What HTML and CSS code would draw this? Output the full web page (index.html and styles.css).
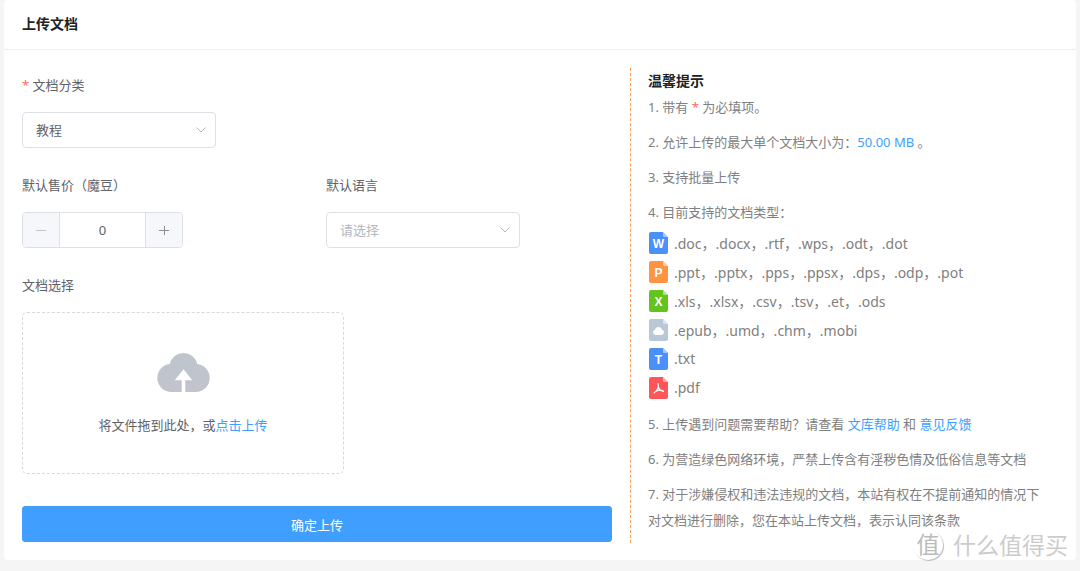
FILE: index.html
```html
<!DOCTYPE html>
<html lang="zh-CN">
<head>
<meta charset="utf-8">
<meta name="viewport" content="width=device-width, initial-scale=1">
<title>上传文档</title>
<link rel="stylesheet" href="styles.css">
</head>
<body>
<main class="card">
  <header class="card-header"><h1 class="title">上传文档</h1></header>
  <div class="card-body">
    <form class="form">
      <div class="form-item">
        <label class="label" for="category"><span class="required">*</span> 文档分类</label>
        <div class="select-wrap">
          <select class="select" id="category"><option>教程</option></select>
          <svg class="chevron" viewBox="0 0 10 6" aria-hidden="true"><path d="M.5.5 5 5 9.500.5"/></svg>
        </div>
      </div>
      <div class="form-row">
        <div class="form-item">
          <label class="label" for="price">默认售价（魔豆）</label>
          <div class="stepper">
            <button class="step" type="button" aria-label="减少" disabled><svg viewBox="0 0 10 10"><path d="M0 5.500H10"/></svg></button>
            <input class="step-value" id="price" type="text" inputmode="numeric" value="0">
            <button class="step" type="button" aria-label="增加"><svg viewBox="0 0 10 10"><path d="M0 5.500H10M5.500 1V10"/></svg></button>
          </div>
        </div>
        <div class="form-item">
          <label class="label" for="language">默认语言</label>
          <div class="select-wrap">
            <select class="select placeholder" id="language"><option>请选择</option></select>
            <svg class="chevron" viewBox="0 0 10 6" aria-hidden="true"><path d="M.5.5 5 5 9.500.5"/></svg>
          </div>
        </div>
      </div>
      <div class="form-item">
        <label class="label" for="files">文档选择</label>
        <label class="dropzone">
          <input class="file-input" id="files" type="file" multiple>
          <svg class="cloud" viewBox="0 0 53 40" aria-hidden="true">
            <path d="M13.500 40A14 14 0 0 1 12.800 12.100 14 14 0 0 1 40.200 12.100 14 14 0 0 1 39.500 40H28.300V28.300H35.300L26.500 17.300 17.700 28.300H24.700V40Z"/>
          </svg>
          <span class="drop-text">将文件拖到此处，或<span class="link">点击上传</span></span>
        </label>
      </div>
      <button class="submit" type="submit">确定上传</button>
    </form>
    <aside class="tips">
      <h2 class="title">温馨提示</h2>
      <p class="tip">1. 带有 <span class="required">*</span> 为必填项。</p>
      <p class="tip">2. 允许上传的最大单个文档大小为：<span class="link">50.00 MB</span> 。</p>
      <p class="tip">3. 支持批量上传</p>
      <p class="tip">4. 目前支持的文档类型：</p>
      <ul class="types">
        <li class="type"><svg class="file-icon word" viewBox="0 0 19 22" aria-hidden="true"><path class="sheet" d="M2 0H14L19 5V20A2 2 0 0 1 17 22H2A2 2 0 0 1 0 20V2A2 2 0 0 1 2 0Z"/><path class="fold" d="M14 0 19 5H15A1 1 0 0 1 14 4Z"/><text x="9.500" y="16">W</text></svg>.doc，.docx，.rtf，.wps，.odt，.dot</li>
        <li class="type"><svg class="file-icon slides" viewBox="0 0 19 22" aria-hidden="true"><path class="sheet" d="M2 0H14L19 5V20A2 2 0 0 1 17 22H2A2 2 0 0 1 0 20V2A2 2 0 0 1 2 0Z"/><path class="fold" d="M14 0 19 5H15A1 1 0 0 1 14 4Z"/><text x="9.500" y="16">P</text></svg>.ppt，.pptx，.pps，.ppsx，.dps，.odp，.pot</li>
        <li class="type"><svg class="file-icon sheetfile" viewBox="0 0 19 22" aria-hidden="true"><path class="sheet" d="M2 0H14L19 5V20A2 2 0 0 1 17 22H2A2 2 0 0 1 0 20V2A2 2 0 0 1 2 0Z"/><path class="fold" d="M14 0 19 5H15A1 1 0 0 1 14 4Z"/><text x="9.500" y="16">X</text></svg>.xls，.xlsx，.csv，.tsv，.et，.ods</li>
        <li class="type"><svg class="file-icon book" viewBox="0 0 19 22" aria-hidden="true"><path class="sheet" d="M2 0H14L19 5V20A2 2 0 0 1 17 22H2A2 2 0 0 1 0 20V2A2 2 0 0 1 2 0Z"/><path class="fold" d="M14 0 19 5H15A1 1 0 0 1 14 4Z"/><path class="mark" d="M6.500 16A2.700 2.700 0 0 1 6 10.700 3.600 3.600 0 0 1 13 10.700 2.700 2.700 0 0 1 12.500 16Z"/></svg>.epub，.umd，.chm，.mobi</li>
        <li class="type"><svg class="file-icon word" viewBox="0 0 19 22" aria-hidden="true"><path class="sheet" d="M2 0H14L19 5V20A2 2 0 0 1 17 22H2A2 2 0 0 1 0 20V2A2 2 0 0 1 2 0Z"/><path class="fold" d="M14 0 19 5H15A1 1 0 0 1 14 4Z"/><text x="9.500" y="16">T</text></svg>.txt</li>
        <li class="type"><svg class="file-icon pdf" viewBox="0 0 19 22" aria-hidden="true"><path class="sheet" d="M2 0H14L19 5V20A2 2 0 0 1 17 22H2A2 2 0 0 1 0 20V2A2 2 0 0 1 2 0Z"/><path class="fold" d="M14 0 19 5H15A1 1 0 0 1 14 4Z"/><path class="line" d="M9 6.500C10 9.500 9 13 5 16M9.300 10C10.200 12.500 12 14 14.500 14.500M6.500 14.500C9 13.200 11.500 12.800 14 13.500"/></svg>.pdf</li>
      </ul>
      <p class="tip">5. 上传遇到问题需要帮助？请查看 <a class="link" href="#help">文库帮助</a> 和 <a class="link" href="#feedback">意见反馈</a></p>
      <p class="tip">6. 为营造绿色网络环境，严禁上传含有淫秽色情及低俗信息等文档</p>
      <p class="tip">7. 对于涉嫌侵权和违法违规的文档，本站有权在不提前通知的情况下对文档进行删除，您在本站上传文档，表示认同该条款</p>
    </aside>
  </div>
  <div class="watermark"><span class="seal">值</span><span>什么值得买</span></div>
</main>
</body>
</html>
```
FILE: styles.css
```css
* { box-sizing: border-box; }
body {
  margin: 0;
  padding: 0 4px 11px;
  background: #f5f5f5;
  color: #606266;
  font-family: "Noto Sans", "Noto Sans CJK SC", sans-serif;
  font-size: 13px;
}
input, select, button { font: inherit; color: inherit; }
h1, h2, p, ul { margin: 0; padding: 0; }
.card { position: relative; background: #fff; border-radius: 4px; }
.card-header { padding: 11px 18px 12px; border-bottom: 1px solid #ebeef5; }
.title { font-size: 14px; line-height: 26px; font-weight: 700; color: #222; }
.card-body {
  display: grid;
  grid-template-columns: minmax(0, 590fr) minmax(0, 428fr);
  gap: 18px;
  padding: 18px 18px 17px;
}
.form { display: flex; flex-direction: column; gap: 20px; }
.form-row { display: grid; grid-template-columns: 1fr 1fr; gap: 18px; }
.label { display: block; line-height: 34px; margin-bottom: 10px; }
.required { color: #f56c6c; }
.link { color: #409eff; text-decoration: none; }
.select-wrap { position: relative; width: 194px; }
.select {
  display: block;
  width: 100%;
  height: 36px;
  padding: 0 32px 0 13px;
  appearance: none;
  background: #fff;
  border: 1px solid #dcdfe6;
  border-radius: 4px;
}
.placeholder { color: #b4b8c0; }
.chevron {
  position: absolute;
  right: 10px;
  top: 15px;
  width: 10px;
  height: 6px;
  fill: none;
  stroke: #b4b8c0;
  pointer-events: none;
}
.stepper {
  display: flex;
  width: 161px;
  height: 36px;
  border: 1px solid #dcdfe6;
  border-radius: 4px;
  overflow: hidden;
}
.step {
  display: flex;
  align-items: center;
  justify-content: center;
  width: 36px;
  padding: 0;
  border: 0;
  background: #f5f7fa;
}
.step svg { width: 10px; height: 10px; fill: none; stroke: #8a8d93; }
.step:disabled svg { stroke: #c0c4cc; }
.step-value {
  flex: 1;
  min-width: 0;
  padding: 0;
  border: solid #dcdfe6;
  border-width: 0 1px;
  text-align: center;
}
.dropzone {
  display: flex;
  flex-direction: column;
  align-items: center;
  gap: 20px;
  width: 322px;
  padding: 39px 0 35px;
  border: 1px dashed #d9d9d9;
  border-radius: 5px;
  cursor: pointer;
}
.file-input { position: absolute; width: 1px; height: 1px; opacity: 0; }
.cloud { width: 53px; height: 40px; fill: #c0c4cc; }
.drop-text { line-height: 26px; }
.submit {
  height: 36px;
  margin-top: 12px;
  border: 1px solid #409eff;
  border-radius: 3px;
  background: #409eff;
  color: #fff;
}
.tips {
  padding: 0 8px 10px 17px;
  border-left: 1px dashed #ff9a57;
  color: #808080;
}
.tip { line-height: 26px; margin-bottom: 9px; }
.tip:last-child { margin-bottom: 0; }
.types { list-style: none; margin: -6px 0 9px; }
.type { display: flex; align-items: center; gap: 6px; height: 29px; font-size: 14px; }
.file-icon { width: 19px; height: 22px; margin-left: 1px; }
.file-icon text {
  fill: #fff;
  font: 700 12px "Liberation Sans", sans-serif;
  text-anchor: middle;
}
.word .sheet { fill: #4a90fa; }
.slides .sheet { fill: #ff9442; }
.sheetfile .sheet { fill: #62c41d; }
.book .sheet { fill: #b8c8d6; }
.pdf .sheet { fill: #fd5558; }
.fold { fill: #fff; opacity: .5; }
.mark { fill: #fff; }
.line { fill: none; stroke: #fff; stroke-width: 1.2; stroke-linecap: round; }
.watermark {
  position: absolute;
  right: 8px;
  bottom: 0;
  display: flex;
  align-items: center;
  gap: 10px;
  color: #ccc;
  font-size: 23px;
  line-height: 30px;
  text-shadow: -1px -1px 0 #fff;
  pointer-events: none;
}
.seal {
  width: 30px;
  height: 30px;
  border-radius: 50%;
  background: #fff;
  box-shadow: 1px 1px 1px #bbb;
  color: #bbb;
  line-height: 28px;
  text-align: center;
}
```
